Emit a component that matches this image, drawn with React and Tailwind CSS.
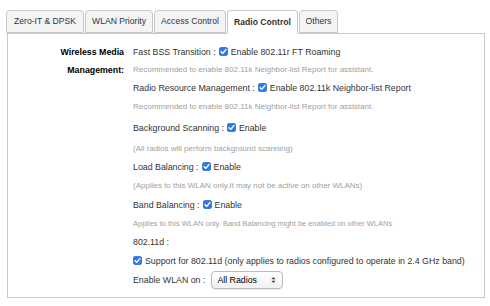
import React from "react";

function Check() {
  return (
    <svg width="9" height="9" viewBox="0 0 10 10" className="inline-block align-middle mx-[3px] relative top-[-1px]">
      <rect x="0.5" y="0.5" width="9" height="9" rx="2" fill="#2f7ae5" stroke="#2a6fd6" />
      <path d="M2.3 5.2 L4.2 7 L7.7 2.9" fill="none" stroke="#fff" strokeWidth="1.6" strokeLinecap="round" strokeLinejoin="round" />
    </svg>
  );
}

const tabs = [
  { t: "Zero-IT & DPSK", w: "w-[78px]" },
  { t: "WLAN Priority", w: "w-[68px]" },
  { t: "Access Control", w: "w-[72px]" },
  { t: "Radio Control", w: "w-[71px]" },
  { t: "Others", w: "w-[39px]" },
];

export default function App() {
  return (
    <div className="w-[490px] h-[306px] bg-white text-[#333] text-[8.8px]" style={{ fontFamily: '"Liberation Sans", Arial, sans-serif' }}>
      <div className="pt-[10px] pl-[6px]">
        <div className="flex items-end h-[23px] text-[8.6px]">
          {tabs.map(({ t, w }) => {
            const active = t === "Radio Control";
            return (
              <div
                key={t}
                className={
                  w +
                  " mr-[1px] flex items-center justify-center whitespace-nowrap border border-[#c8c8c8] rounded-t-[4px] " +
                  (active ? "bg-white font-bold border-b-white relative z-10 h-[24px] -mb-[1px]" : "bg-[#f4f4f4] h-[23px]")
                }
              >
                {t}
              </div>
            );
          })}
        </div>
        <div className="w-[478px] h-[265px] border border-[#c8c8c8] ml-[1px] pt-[9px] flex">
          <div className="w-[116px] text-right font-bold text-black leading-[18px]">
            <div>Wireless Media</div>
            <div>Management:</div>
          </div>
          <div className="ml-[9px] flex flex-col leading-[18px] whitespace-nowrap">
            <div className="h-[18px]">Fast BSS Transition :<Check />Enable 802.11r FT Roaming</div>
            <div className="h-[18px] text-[#a0a0a0] text-[8px]">Recommended to enable 802.11k Neighbor-list Report for assistant.</div>
            <div className="h-[18px]">Radio Resource Management :<Check />Enable 802.11k Neighbor-list Report</div>
            <div className="h-[18px] mt-[1px] text-[#a0a0a0] text-[8px]">Recommended to enable 802.11k Neighbor-list Report for assistant.</div>
            <div className="h-[18px] mt-[3px]">Background Scanning :<Check />Enable</div>
            <div className="h-[18px] mt-[3px] text-[#a0a0a0] text-[8px]">(All radios will perform background scanning)</div>
            <div className="h-[18px]">Load Balancing :<Check />Enable</div>
            <div className="h-[18px] mt-[1px] text-[#a0a0a0] text-[8px]">(Applies to this WLAN only.It may not be active on other WLANs)</div>
            <div className="h-[18px] mt-[1px]">Band Balancing :<Check />Enable</div>
            <div className="h-[18px] mt-[1px] text-[#a0a0a0] text-[7.5px]">Applies to this WLAN only. Band Balancing might be enabled on other WLANs</div>
            <div className="h-[18px]">802.11d :</div>
            <div className="h-[18px] mt-[1px] -ml-[3px]"><Check />Support for 802.11d (only applies to radios configured to operate in 2.4 GHz band)</div>
            <div className="h-[18px] mt-[1px] flex items-center">
              <span>Enable WLAN on :</span>
              <div className="ml-[6px] w-[72px] h-[18px] border border-[#bbb] rounded-[4px] bg-gradient-to-b from-white to-[#f1f1f1] flex items-center justify-between pl-[5px] pr-[6px] shadow-[0_1px_1px_rgba(0,0,0,0.08)]">
                <span className="text-black">All Radios</span>
                <svg width="5" height="8" viewBox="0 0 6 9">
                  <path d="M0.5 3.5 L3 0.8 L5.5 3.5 Z" fill="#444" />
                  <path d="M0.5 5.5 L3 8.2 L5.5 5.5 Z" fill="#444" />
                </svg>
              </div>
            </div>
          </div>
        </div>
      </div>
    </div>
  );
}
